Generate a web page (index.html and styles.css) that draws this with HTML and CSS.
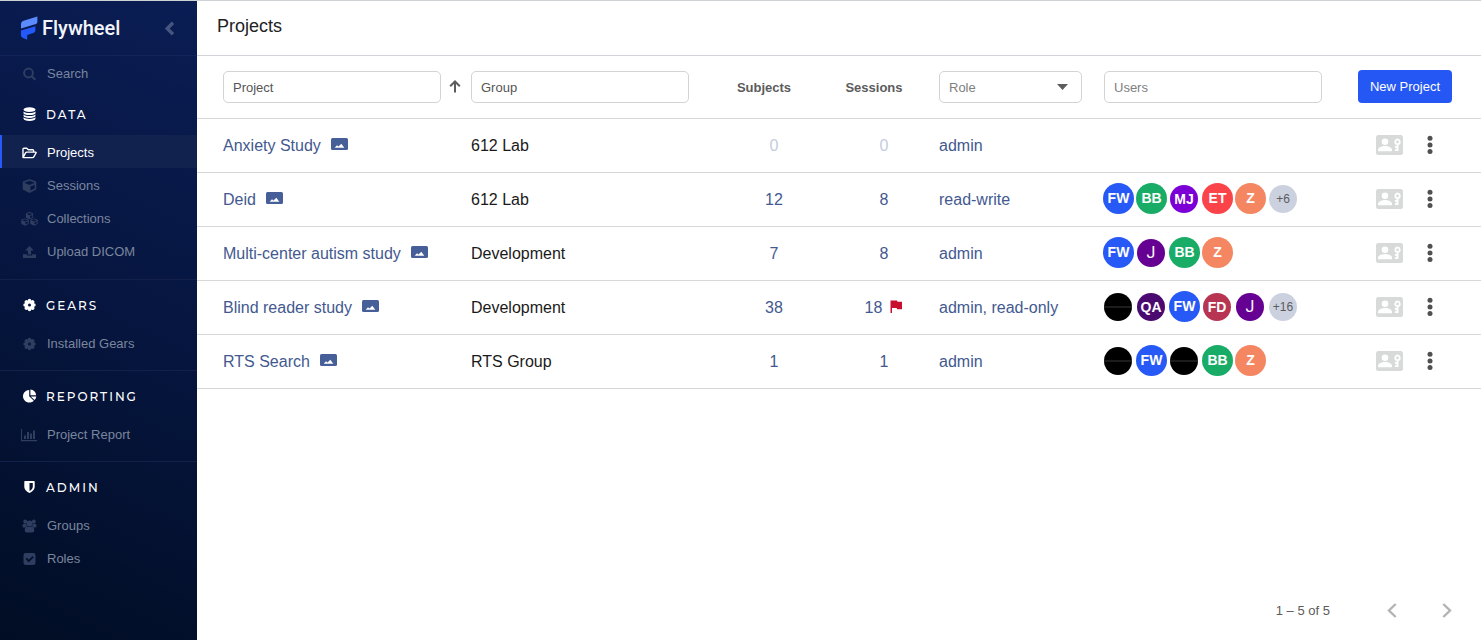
FILE: index.html
```html
<!DOCTYPE html>
<html lang="en">
<head>
<meta charset="utf-8">
<title>Projects - Flywheel</title>
<link rel="stylesheet" href="styles.css">
</head>
<body>
<svg class="sprite" aria-hidden="true">
  <symbol id="cube" viewBox="0 0 512 512"><path d="M239.1 6.3l-208 78c-18.7 7-31.1 25-31.1 45v225.1c0 18.2 10.3 34.8 26.5 42.9l208 104c13.5 6.8 29.4 6.8 42.9 0l208-104c16.3-8.1 26.5-24.8 26.5-42.9V129.3c0-20-12.4-37.9-31.1-44.9l-208-78C262 2.2 250 2.2 239.1 6.3zM256 68.4l192 72v1.1l-192 78-192-78v-1.1l192-72zm32 356V275.5l160-65v133.9l-160 80z"/></symbol>
  <symbol id="gear" viewBox="0 0 14 14"><path fill-rule="evenodd" d="M5.700 1.200Q7 .4 8.300 1.200L8.800 2.500 10.200 1.900Q11.700 2.300 12.100 3.800L11.500 5.200 12.800 5.700Q13.600 7 12.800 8.300L11.500 8.800 12.100 10.200Q11.700 11.700 10.200 12.100L8.800 11.500 8.300 12.800Q7 13.600 5.700 12.800L5.200 11.500 3.800 12.100Q2.300 11.700 1.900 10.200L2.500 8.800 1.200 8.300Q.4 7 1.200 5.700L2.500 5.200 1.900 3.800Q2.300 2.300 3.800 1.900L5.200 2.500zM7 5.500a1.500 1.500 0 1 0 0 3 1.500 1.500 0 0 0 0-3z"/></symbol>
  <symbol id="picture" viewBox="0 0 17 12"><rect width="17" height="12" rx="1.500" fill="#475f99"/><path d="M3.700 9.800L6 7.200l1.500 1.400 2.800-2.900 3 4.100z" fill="#fff"/></symbol>
  <symbol id="contact" viewBox="0 0 27 20"><rect width="27" height="20" rx="2.500" fill="#d8d9d9"/><g fill="#fff"><circle cx="9" cy="6.700" r="3.300"/><path d="M2 16.300v-1.500c0-2.600 4.300-3.900 7-3.900s7 1.300 7 3.900v1.500z"/><path fill-rule="evenodd" d="M21.500 3.600a3.300 3.300 0 0 1 1 6.400v6h-3.700v-1.800h1.600v-1.500h-1.600V11h1.800V10a3.300 3.300 0 0 1 .9-6.400zm0 2a1.300 1.300 0 1 0 0 2.600 1.300 1.300 0 0 0 0-2.600z"/></g></symbol>
  <symbol id="dots" viewBox="0 0 6 20"><circle cx="3" cy="3.200" r="2.500"/><circle cx="3" cy="9.900" r="2.500"/><circle cx="3" cy="16.600" r="2.500"/></symbol>
</svg>

<div class="app">
  <aside class="sidebar">
    <div class="brand">
      <a class="logo" href="#">
        <svg width="17" height="25" viewBox="0 0 17 25" aria-hidden="true"><path d="M0 8.200C0 6.500 1 5.300 2.600 4.700L16.400.4v5c0 1.400-.8 2.400-2.200 2.900L0 12.600z" fill="#5b8bff"/><path d="M0 14.600l14.400-4.300v3.900c0 1.400-.9 2.300-2.200 2.800l-6 1.900v4.900L2 21.900C.7 21.300 0 20.500 0 19.200z" fill="#2358fa"/></svg>
        <span>Flywheel</span>
      </a>
      <button class="collapse" type="button" aria-label="Collapse menu"><svg width="11" height="15" viewBox="0 0 11 15"><path d="M9 1.700L3.200 7.500 9 13.300" fill="none" stroke="currentColor" stroke-width="3.400"/></svg></button>
    </div>
    <nav>
      <a class="item" href="#"><svg class="icon" viewBox="0 0 14 14"><circle cx="6" cy="6" r="4.400" fill="none" stroke="currentColor" stroke-width="2"/><path d="M9.200 9.200l3.600 3.600" stroke="currentColor" stroke-width="2.200"/></svg>Search</a>
      <section class="group first">
        <h2><svg class="icon" viewBox="0 0 14 14"><path d="M1 2.600C1 1.200 3.500.2 7 .2s6 1 6 2.400-2.500 2.400-6 2.400-6-1-6-2.400zM1 4.400c1.200 1.200 3.400 1.700 6 1.700s4.800-.5 6-1.700v1.500C13 7.200 10.500 8 7 8S1 7.200 1 5.900zM1 7.400c1.200 1.200 3.400 1.700 6 1.700s4.800-.5 6-1.700v1.400c0 1.300-2.500 2.100-6 2.100s-6-.8-6-2.100zM1 10.300c1.200 1.200 3.400 1.700 6 1.700s4.800-.5 6-1.700v1.300c0 1.400-2.500 2.300-6 2.300s-6-.9-6-2.300z"/></svg>Data</h2>
        <a class="item active" href="#" aria-current="page"><svg class="icon" viewBox="0 0 15 14"><path d="M1 11.600V3.100q0-.9.900-.9h2.900l1.500 1.500h4.400q.9 0 .9.900v1.500M1 11.600l2.500-4.700q.4-.8 1.300-.8h8.700q1 0 .5.900l-2.200 3.900q-.4.700-1.300.7z" fill="none" stroke="currentColor" stroke-width="1.400" stroke-linejoin="round"/></svg>Projects</a>
        <a class="item" href="#"><svg class="icon" viewBox="0 0 14 14"><use href="#cube" x="0" y="0" width="14" height="14"/></svg>Sessions</a>
        <a class="item" href="#"><svg class="icon wide" viewBox="0 0 17 14"><use href="#cube" x="4.500" y="0" width="8" height="7.500"/><use href="#cube" x="0" y="6.300" width="8" height="7.500"/><use href="#cube" x="9" y="6.300" width="8" height="7.500"/></svg>Collections</a>
        <a class="item" href="#"><svg class="icon" viewBox="0 0 14 14"><path d="M7 1l4.400 4.400H8.600v4H5.400v-4H2.600zM1 9.300h3.400v1.200h5.200V9.300H13q.6 0 .6.600v2.500q0 .6-.6.600H1q-.6 0-.6-.6V9.900q0-.6.6-.6z"/></svg>Upload DICOM</a>
      </section>
      <section class="group">
        <h2><svg class="icon" viewBox="0 0 14 14"><use href="#gear"/></svg>Gears</h2>
        <a class="item" href="#"><svg class="icon" viewBox="0 0 14 14"><use href="#gear"/></svg>Installed Gears</a>
      </section>
      <section class="group">
        <h2><svg class="icon" viewBox="0 0 14 14"><path d="M6.700 1v6.300l4.600 4.400A6.300 6.300 0 1 1 6.700 1zM7.900.4a6.100 6.100 0 0 1 5.700 5.900H7.900zM8.300 7.400h5.500a6 6 0 0 1-1.800 3.600z"/></svg>Reporting</h2>
        <a class="item" href="#"><svg class="icon wide" viewBox="0 0 17 14"><path d="M1 1v11h15v1.200H0V1zM3 7.500h2V11H3zM6 4h2v7H6zM9 5.500h2V11H9zM12 2.500h2V11h-2z"/></svg>Project Report</a>
      </section>
      <section class="group">
        <h2><svg class="icon" viewBox="0 0 14 14"><path fill-rule="evenodd" d="M2.600 1h8.800q.8 0 .8.800v4.700c0 3.200-2.700 5.500-5.200 6.500-2.500-1-5.200-3.300-5.200-6.500V1.800q0-.8.800-.8zM7 3v7.900c1.700-.9 3.300-2.500 3.300-4.500V3z"/></svg>Admin</h2>
        <a class="item" href="#"><svg class="icon" viewBox="0 0 14 14"><circle cx="2.700" cy="2.500" r="1.900"/><circle cx="11.300" cy="2.500" r="1.900"/><circle cx="7" cy="4.500" r="3"/><path d="M0 7.200C0 5.400.6 4.700 1.600 4.700h2.100c.1 1.200.4 1.800 1 2.500-1 .1-1.700.5-2.200 1.200H1.200Q0 8.400 0 7.200zM14 7.200c0-1.800-.6-2.500-1.600-2.500h-2.100c-.1 1.200-.4 1.800-1 2.500 1 .1 1.700.5 2.200 1.200h1.300q1.200 0 1.200-1.200zM2.200 11.500c0-2.500.9-3.900 2.600-3.900 1.500 .4 2.900 .4 4.400 0 1.700 0 2.600 1.400 2.600 3.900q0 2-2 2H4.200q-2 0-2-2z"/></svg>Groups</a>
        <a class="item" href="#"><svg class="icon" viewBox="0 0 14 14"><path fill-rule="evenodd" d="M3.200 1h7.600Q13 1 13 3.200v7.600q0 2.200-2.200 2.200H3.200Q1 13 1 10.800V3.200Q1 1 3.200 1zM6.300 10.200l5-5-1.200-1.200-3.800 3.800-2-2-1.200 1.200z"/></svg>Roles</a>
      </section>
    </nav>
  </aside>

  <main class="main">
    <header class="title-bar"><h1>Projects</h1></header>
    <table class="projects">
      <colgroup><col class="c-project"><col class="c-group"><col class="c-count"><col class="c-count"><col class="c-role"><col class="c-users"><col class="c-actions"></colgroup>
      <thead>
        <tr>
          <th><div class="sort"><input class="field dark" type="text" placeholder="Project" aria-label="Project"><svg width="12" height="15" viewBox="0 0 12 15" aria-hidden="true"><path d="M6 12.500V2M1.200 6.300L6 1.500l4.800 4.800" fill="none" stroke="#5c5c5c" stroke-width="2"/></svg></div></th>
          <th><input class="field dark" type="text" placeholder="Group" aria-label="Group"></th>
          <th class="count">Subjects</th>
          <th class="count">Sessions</th>
          <th><div class="select"><select class="field" aria-label="Role"><option>Role</option><option>admin</option><option>read-write</option><option>read-only</option></select><svg width="11" height="6" viewBox="0 0 11 6" aria-hidden="true"><path d="M0 0h11L5.500 6z" fill="#5c5c5c"/></svg></div></th>
          <th><input class="field" type="text" placeholder="Users" aria-label="Users"></th>
          <th class="actions"><button class="primary" type="button">New Project</button></th>
        </tr>
      </thead>
      <tbody>
        <tr>
          <td><a href="#">Anxiety Study</a><svg class="pic"><use href="#picture"/></svg></td>
          <td>612 Lab</td>
          <td class="count zero">0</td>
          <td class="count zero">0</td>
          <td><a href="#">admin</a></td>
          <td></td>
          <td class="tools"><div class="row-actions"><button type="button" aria-label="Permissions"><svg width="27" height="20"><use href="#contact"/></svg></button><button class="more" type="button" aria-label="More"><svg width="6" height="20"><use href="#dots"/></svg></button></div></td>
        </tr>
        <tr>
          <td><a href="#">Deid</a><svg class="pic"><use href="#picture"/></svg></td>
          <td>612 Lab</td>
          <td class="count">12</td>
          <td class="count">8</td>
          <td><a href="#">read-write</a></td>
          <td class="tools"><div class="avatars"><span class="big blue">FW</span><span class="big green">BB</span><span class="violet">MJ</span><span class="big red">ET</span><span class="big orange">Z</span><span class="extra">+6</span></div></td>
          <td class="tools"><div class="row-actions"><button type="button" aria-label="Permissions"><svg width="27" height="20"><use href="#contact"/></svg></button><button class="more" type="button" aria-label="More"><svg width="6" height="20"><use href="#dots"/></svg></button></div></td>
        </tr>
        <tr>
          <td><a href="#">Multi-center autism study</a><svg class="pic"><use href="#picture"/></svg></td>
          <td>Development</td>
          <td class="count">7</td>
          <td class="count">8</td>
          <td><a href="#">admin</a></td>
          <td class="tools"><div class="avatars"><span class="big blue">FW</span><span class="purple">J</span><span class="big green">BB</span><span class="big orange">Z</span></div></td>
          <td class="tools"><div class="row-actions"><button type="button" aria-label="Permissions"><svg width="27" height="20"><use href="#contact"/></svg></button><button class="more" type="button" aria-label="More"><svg width="6" height="20"><use href="#dots"/></svg></button></div></td>
        </tr>
        <tr>
          <td><a href="#">Blind reader study</a><svg class="pic"><use href="#picture"/></svg></td>
          <td>Development</td>
          <td class="count">38</td>
          <td class="count">18<svg class="flag" viewBox="0 0 13 13"><path d="M.5.500H7l.5 1.300H12v7.500H7.200L6.600 8H2v5H.5z" fill="#c8102e"/></svg></td>
          <td><a href="#">admin, read-only</a></td>
          <td class="tools"><div class="avatars"><span class="photo"></span><span class="indigo">QA</span><span class="big blue">FW</span><span class="crimson">FD</span><span class="purple">J</span><span class="extra">+16</span></div></td>
          <td class="tools"><div class="row-actions"><button type="button" aria-label="Permissions"><svg width="27" height="20"><use href="#contact"/></svg></button><button class="more" type="button" aria-label="More"><svg width="6" height="20"><use href="#dots"/></svg></button></div></td>
        </tr>
        <tr>
          <td><a href="#">RTS Search</a><svg class="pic"><use href="#picture"/></svg></td>
          <td>RTS Group</td>
          <td class="count">1</td>
          <td class="count">1</td>
          <td><a href="#">admin</a></td>
          <td class="tools"><div class="avatars"><span class="photo"></span><span class="big blue">FW</span><span class="photo"></span><span class="big green">BB</span><span class="big orange">Z</span></div></td>
          <td class="tools"><div class="row-actions"><button type="button" aria-label="Permissions"><svg width="27" height="20"><use href="#contact"/></svg></button><button class="more" type="button" aria-label="More"><svg width="6" height="20"><use href="#dots"/></svg></button></div></td>
        </tr>
      </tbody>
    </table>
    <footer class="pager">
      <span>1 – 5 of 5</span>
      <button type="button" aria-label="Previous page"><svg width="10" height="15" viewBox="0 0 10 15"><path d="M8.700 1L2 7.500 8.700 14" fill="none" stroke="#b3b3b3" stroke-width="2.400"/></svg></button>
      <button type="button" aria-label="Next page"><svg width="10" height="15" viewBox="0 0 10 15"><path d="M1.300 1L8 7.500 1.300 14" fill="none" stroke="#b3b3b3" stroke-width="2.400"/></svg></button>
    </footer>
  </main>
</div>
</body>
</html>
```
FILE: styles.css
```css
* { box-sizing: border-box; }
body {
  margin: 0;
  font-family: "Helvetica Neue", "Liberation Sans", Arial, sans-serif;
  font-size: 16px;
  color: #1a1a1a;
  background: #fff;
}
a { color: inherit; text-decoration: none; }
button { padding: 0; border: 0; background: none; font: inherit; color: inherit; cursor: pointer; }
svg { fill: currentColor; }
.sprite { position: absolute; width: 0; height: 0; }

.app { display: flex; min-height: 100vh; border-top: 1px solid #cfd2d4; }

/* Sidebar */
.sidebar {
  flex: 0 0 197px;
  background: linear-gradient(205deg, #0a1d54 0%, #06153e 50%, #010d24 100%);
  color: #7a869e;
  font-size: 13px;
}
.brand {
  display: flex;
  align-items: center;
  justify-content: space-between;
  height: 55px;
  padding: 0 22px 0 21px;
  border-bottom: 1px solid #14245a;
}
.logo {
  display: flex;
  align-items: center;
  gap: 4px;
  font: 500 20px Roboto, "Liberation Sans", sans-serif;
  color: #f2f4fa;
}
.collapse { color: #46557f; }
.collapse svg { display: block; }
.item { display: flex; align-items: center; height: 33px; padding: 2px 0 0 22px; }
.icon { width: 15px; height: 14px; margin-right: 10px; color: #2f3d60; }
.icon.wide { width: 17px; margin: 0 9px 0 -1px; }
.item.active { background: #11224f; color: #fff; box-shadow: inset 2px 0 #2659f7; }
.item.active .icon { color: #fff; }
.group { padding: 4px 0 11px; border-top: 1px solid #12204a; }
.group.first { padding-bottom: 12px; border-top: 0; }
.group h2 {
  display: flex;
  align-items: center;
  height: 42px;
  margin: 0;
  padding-left: 22px;
  font: 500 12px Montserrat, Inter, sans-serif;
  letter-spacing: 2px;
  text-transform: uppercase;
  color: #fff;
}
.group h2 .icon { margin-right: 9px; color: #fff; }

/* Content */
.main { flex: 1; display: flex; flex-direction: column; min-width: 0; }
.title-bar { height: 55px; padding: 0 20px 4px; border-bottom: 1px solid #d3d3da; }
h1 { margin: 0; font-size: 18px; font-weight: 400; line-height: 50px; color: #222; }

.projects { width: 100%; table-layout: fixed; border-collapse: separate; border-spacing: 0; }
.c-project { width: 274px; }
.c-group { width: 248px; }
.c-count { width: 110px; }
.c-role { width: 165px; }
.c-users { width: 248px; }
.c-actions { width: 129px; }
.projects th, .projects td {
  padding: 0;
  border-bottom: 1px solid #d8d8d8;
  text-align: left;
  vertical-align: middle;
}
.projects th:first-child, .projects td:first-child { padding-left: 26px; }
.projects th { height: 63px; font-size: 13px; color: #5c5c5c; }
.projects td { height: 54px; }
.projects .count { text-align: center; }
.projects th.count { padding-right: 20px; }
.projects td a, .projects td.count { color: #43598f; }
.projects td.zero { color: #c3cce0; }
.projects th.actions { padding: 0 29px 2px 0; text-align: right; }
.projects td.tools { padding-bottom: 2px; }

.field {
  display: block;
  width: calc(100% - 30px);
  height: 32px;
  padding: 0 9px;
  border: 1px solid #d3d3d6;
  border-radius: 5px;
  background: #fff;
  font: 13px "Helvetica Neue", "Liberation Sans", Arial, sans-serif;
  color: #808080;
}
.field::placeholder { color: #808080; opacity: 1; }
.field.dark::placeholder { color: #555; }
.sort { display: flex; align-items: center; gap: 8px; }
.select { position: relative; width: 143px; }
.select select { width: 100%; appearance: none; }
.select svg { position: absolute; top: 13px; right: 14px; pointer-events: none; }
.primary { width: 94px; height: 33px; border-radius: 4px; background: #2557f5; color: #fff; font-weight: 400; }

.pic { width: 17px; height: 12px; margin-left: 10px; vertical-align: 1px; }
.flag { width: 13px; height: 13px; margin-left: 8px; vertical-align: 0; }

.avatars { display: flex; align-items: center; margin-left: -1px; }
.avatars span {
  width: 28px;
  height: 28px;
  margin-left: 1px;
  margin-right: 4px;
  border-radius: 50%;
  color: #fff;
  font-size: 14px;
  font-weight: 700;
  line-height: 28px;
  text-align: center;
}
.avatars .big { width: 31px; height: 31px; margin-left: 0; margin-right: 2px; line-height: 31px; }
.avatars .blue { background: #2659f5; }
.avatars .green { background: #19ac66; }
.avatars .violet { background: #7c00d6; }
.avatars .red { background: #fb434a; }
.avatars .orange { background: #f58662; }
.avatars .purple { background: #650092; font: 400 16px/28px Roboto, sans-serif; }
.avatars .indigo { background: #4b0a70; }
.avatars .crimson { background: #b73552; }
.avatars .photo { background: linear-gradient(#000 13px, #1c1c1c 13px, #1c1c1c 15px, #000 15px); }
.avatars .extra { background: #cbd1df; color: #5c5c5c; font-size: 12px; font-weight: 400; }

.row-actions { display: flex; align-items: center; justify-content: flex-end; gap: 15px; padding-right: 39px; }
.row-actions svg { display: block; }
.row-actions .more { display: flex; justify-content: center; width: 24px; color: #505050; }

.pager {
  display: flex;
  align-items: center;
  justify-content: flex-end;
  margin-top: auto;
  padding: 0 14px 10px 0;
  font-size: 13px;
  color: #5c5c5c;
}
.pager span { margin-right: 42px; }
.pager button { display: flex; align-items: center; justify-content: center; width: 40px; height: 40px; }
.pager button + button { margin-left: 15px; }
```
